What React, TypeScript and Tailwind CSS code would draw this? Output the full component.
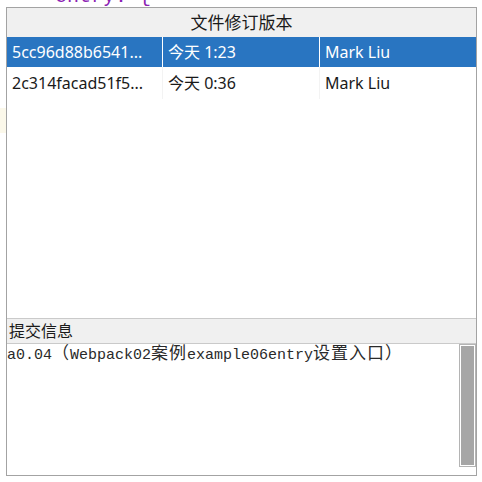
import React from 'react'

const revisions = [
    { hash: "5cc96d88b6541...", time: "今天 1:23", author: "Mark Liu" },
    { hash: "2c314facad51f5...", time: "今天 0:36", author: "Mark Liu" },
]

function App() {
    const selected = 0;
    return (
        <div className="w-[482px] h-[482px] bg-white overflow-hidden text-[#1a1a1a]" style={{ fontFamily: '"Noto Sans", "Noto Sans CJK SC", sans-serif' }}>
            {/* editor line peeking out behind the dialog */}
            <div className="h-[7px] overflow-hidden">
                <div className="pl-[55px] -mt-[15px] text-[20px] leading-[24px] text-[#8b22b3]" style={{ fontFamily: '"Liberation Mono", monospace' }}>entry: {"{"}</div>
            </div>
            <div className="flex">
                <div className="w-[6px]">
                    <div className="mt-[101px] h-[25px] bg-[#fbf8ea]" />
                </div>
                <div className="w-[471px] h-[469px] border border-[#a3a3a3] flex flex-col">
                    <div className="h-[29px] bg-[#f0f0f0] flex items-center justify-center text-[17px]">文件修订版本</div>
                    <div className="h-[281px] bg-white">
                        {revisions.map((item, i) => (
                            <div key={item.hash} className={`flex text-[16px] ${i === 0 ? 'h-[30px]' : 'h-[32px]'}`}>
                                <div className={`w-[155px] pl-[5px] flex items-center whitespace-nowrap overflow-hidden ${i === selected ? 'bg-[#2975c1] text-white' : ''}`}>{item.hash}</div>
                                <div className={`w-px ${i === selected ? 'bg-white' : 'bg-[#f3f3f3]'}`} />
                                <div className={`w-[156px] pl-[5px] flex items-center whitespace-nowrap ${i === selected ? 'bg-[#2975c1] text-white' : ''}`}>{item.time}</div>
                                <div className={`w-px ${i === selected ? 'bg-white' : 'bg-[#f3f3f3]'}`} />
                                <div className={`flex-1 pl-[5px] flex items-center whitespace-nowrap ${i === selected ? 'bg-[#2975c1] text-white' : ''}`}>{item.author}</div>
                            </div>
                        ))}
                    </div>
                    <div className="h-[24px] border-t border-b border-[#cacaca] bg-[#f0f0f0] box-content flex items-center pl-[2px] text-[16px]">提交信息</div>
                    <div className="flex-1 flex">
                        <div className="flex-1 text-[15px] leading-[20px] pt-[1px] text-[#2a2a2a] whitespace-nowrap" style={{ fontFamily: '"Liberation Mono", "Noto Sans CJK SC", monospace' }}>
                            a0.04<span className="text-[17px] tracking-[1px]">（</span>Webpack02<span className="text-[17px] tracking-[1px]">案例</span>example06entry<span className="text-[17px] tracking-[1px]">设置入口）</span>
                        </div>
                        <div className="w-[17px] h-[123px] border border-[#b4b4b4] bg-white p-px">
                            <div className="w-full h-full bg-[#a6a6a6]" />
                        </div>
                    </div>
                </div>
            </div>
        </div>
    )
}

export default App
